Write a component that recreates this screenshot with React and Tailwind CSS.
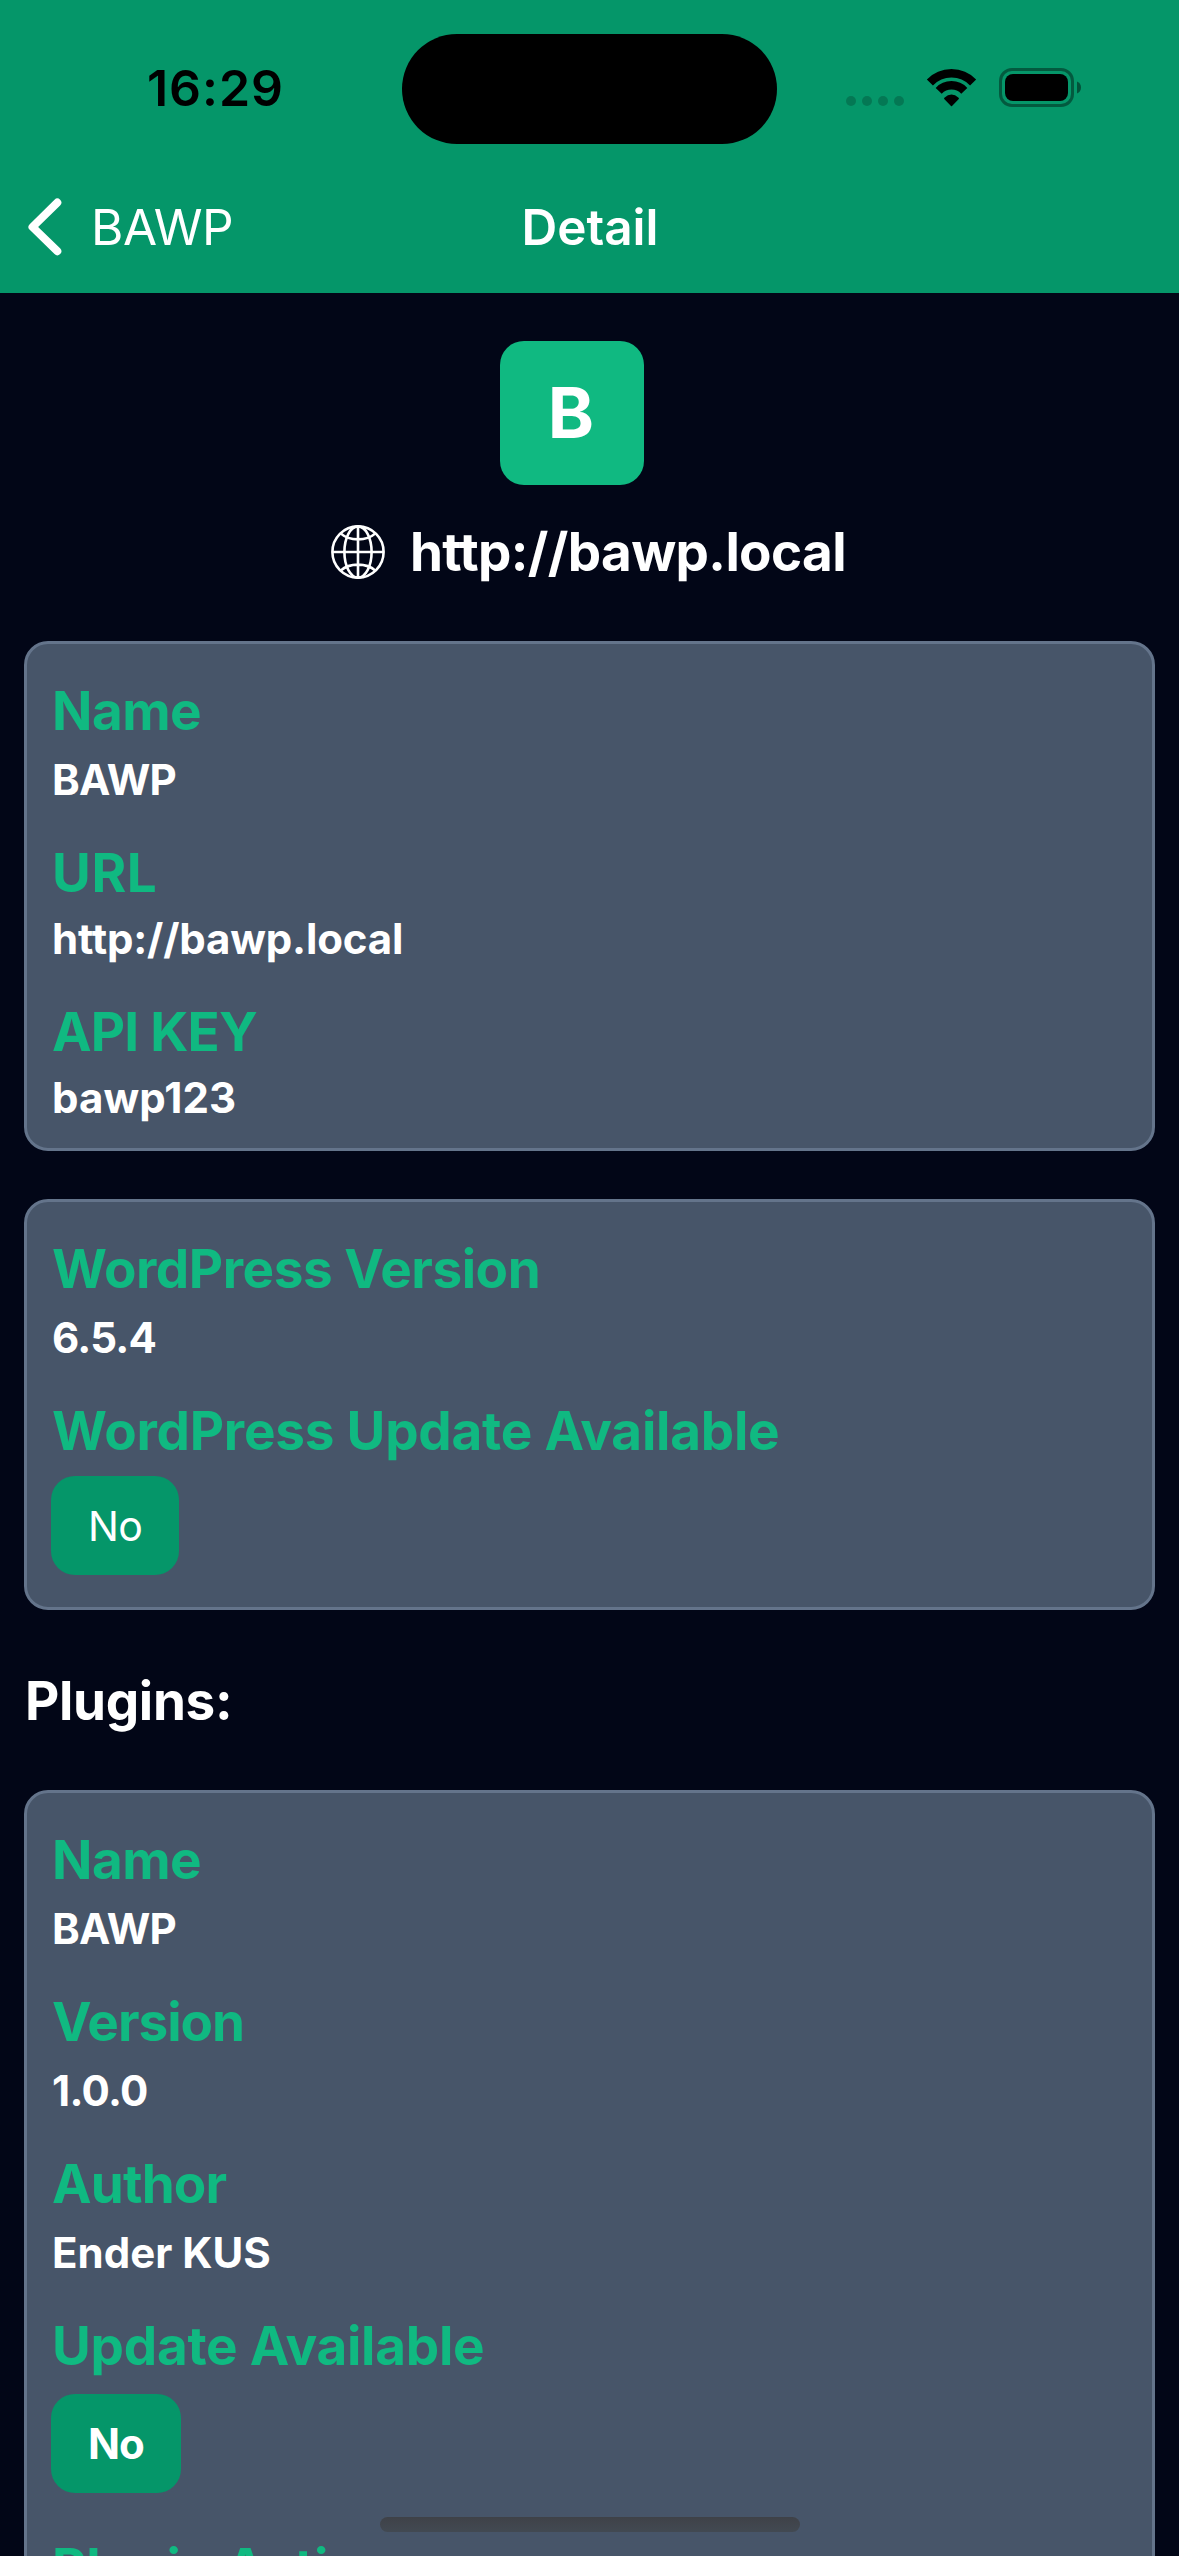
import React from "react";

function StatusBar() {
  return (
    <div className="flex h-[177px] items-start">
      <div className="w-[402px] pl-[147px] pt-[58px] text-[50px] font-semibold leading-[60px] tracking-[0.95px] text-black">
        16:29
      </div>
      <div className="mt-[34px] h-[110px] w-[375px] rounded-full bg-black" />
      <div className="ml-[69px] mt-[96px] flex gap-[6px]">
        {[0, 1, 2, 3].map((i) => (
          <span key={i} className="h-[10px] w-[10px] rounded-full bg-black/20" />
        ))}
      </div>
      <svg className="ml-[22px] mt-[69px]" width="51" height="38" viewBox="0 0 51 38" fill="none" stroke="#000" strokeWidth="8.4">
        <path d="M3.9 13.5A29.8 29.8 0 0 1 47.1 13.5" />
        <path d="M12.7 21.8A17.7 17.7 0 0 1 38.3 21.8" />
        <path d="M18.2 29.9Q17.8 29.3 18.4 28.8Q25.5 22.4 32.6 28.8Q33.2 29.3 32.8 29.9L26 37Q25.5 37.4 25 37Z" fill="#000" stroke="none" />
      </svg>
      <svg className="ml-[22px] mt-[68px]" width="83" height="39" viewBox="0 0 83 39" fill="none">
        <rect x="1.5" y="1.5" width="72" height="36" rx="11.5" stroke="#000" strokeOpacity="0.4" strokeWidth="3" />
        <rect x="6" y="6" width="63" height="27" rx="8" fill="#000" />
        <path d="M78 13.5C80.6 14.4 82 16.8 82 19.5C82 22.2 80.6 24.6 78 25.5Z" fill="#000" fillOpacity="0.45" />
      </svg>
    </div>
  );
}

function NavBar() {
  return (
    <div className="grid h-[116px] grid-cols-[1fr_auto_1fr] text-[49.5px] leading-[60px] text-white">
      <div className="flex items-start">
        <svg className="ml-[27px] mt-[20px]" width="36" height="60" viewBox="0 0 36 60" fill="none" stroke="#fff" strokeWidth="8" strokeLinecap="round" strokeLinejoin="round">
          <path d="M30.3 5.6L5.5 30L30.3 54.2" />
        </svg>
        <span className="ml-[28px] mt-[20px] tracking-[-0.5px]">BAWP</span>
      </div>
      <h1 className="ml-px mt-[20px] font-semibold">Detail</h1>
    </div>
  );
}

function Globe() {
  return (
    <svg width="54" height="54" viewBox="0 0 54 54" fill="none" stroke="#fff" strokeWidth="2.6">
      <circle cx="27" cy="27" r="25.6" />
      <ellipse cx="27" cy="27" rx="13.6" ry="25.6" />
      <path d="M27 1.4V52.6M1.4 27H52.6M9.6 8.4C18.5 16.4 35.5 16.4 44.4 8.4M9.6 45.6C18.5 37.6 35.5 37.6 44.4 45.6" />
    </svg>
  );
}

function Card({ className, children }) {
  return (
    <section className={`mx-[24px] rounded-[24px] border-[3px] border-[#64748b] bg-[#475569] pl-[24px] pt-[37px] ${className}`}>
      {children}
    </section>
  );
}

function Label({ className = "", children }) {
  return (
    <h3 className={`ml-px whitespace-nowrap text-[53px] font-bold leading-[60px] text-[#10b981] ${className}`}>{children}</h3>
  );
}

function Value({ className = "", children }) {
  return (
    <p className={`ml-px whitespace-nowrap text-[42px] font-bold leading-[48px] text-white ${className}`}>{children}</p>
  );
}

export default function App() {
  return (
    <div className="relative h-[2556px] w-[1179px] overflow-hidden bg-[#020617] font-['Inter',sans-serif]">
      <header className="h-[293px] bg-[#059669]">
        <StatusBar />
        <NavBar />
      </header>

      <div className="ml-[500px] mt-[48px] flex h-[144px] w-[144px] items-center justify-center rounded-[24px] bg-[#10b981] pr-[2px] text-[70px] font-bold leading-[84px] text-white">
        B
      </div>

      <div className="ml-[331px] mt-[37px] flex h-[60px] items-start">
        <div className="mt-[3px]">
          <Globe />
        </div>
        <h2 className="ml-[25px] text-[53px] font-bold leading-[60px] tracking-[-0.64px] text-white">http://bawp.local</h2>
      </div>

      <Card className="mt-[59px] h-[510px]">
        <Label className="tracking-[-0.5px]">Name</Label>
        <Value className="mt-[15px] tracking-[-0.7px]">BAWP</Value>
        <Label className="mt-[39px] tracking-[0.6px]">URL</Label>
        <Value className="mt-[12px] tracking-[-0.17px]">http://bawp.local</Value>
        <Label className="mt-[39px] tracking-[-0.78px]">API KEY</Label>
        <Value className="mt-[12px] tracking-[0.07px]">bawp123</Value>
      </Card>

      <Card className="mt-[48px] h-[411px]">
        <Label className="tracking-[-0.44px]">WordPress Version</Label>
        <Value className="mt-[15px] tracking-[-0.8px]">6.5.4</Value>
        <Label className="mt-[39px] tracking-[-0.21px]">WordPress Update Available</Label>
        <div className="mt-[15px] flex h-[99px] w-[128px] items-center justify-center rounded-[24px] bg-[#059669] text-[41px] leading-[48px] tracking-[-0.8px] text-white">
          No
        </div>
      </Card>

      <h2 className="ml-[25px] mt-[61px] text-[53px] font-bold leading-[60px] tracking-[-0.33px] text-white">Plugins:</h2>

      <Card className="mt-[59px] h-[1000px]">
        <Label className="tracking-[-0.5px]">Name</Label>
        <Value className="mt-[15px] tracking-[-0.7px]">BAWP</Value>
        <Label className="mt-[39px] tracking-[-0.99px]">Version</Label>
        <Value className="mt-[15px] tracking-[-0.7px]">1.0.0</Value>
        <Label className="mt-[39px] tracking-[-0.82px]">Author</Label>
        <Value className="mt-[15px]">Ender KUS</Value>
        <Label className="mt-[39px] tracking-[-0.24px]">Update Available</Label>
        <div className="mt-[18px] flex h-[99px] w-[130px] items-center justify-center rounded-[24px] bg-[#059669] text-[42px] font-bold leading-[48px] tracking-[-1px] text-white">
          No
        </div>
        <Label className="mt-[45px] tracking-[-0.2px]">Plugin Active</Label>
      </Card>

      <div className="absolute left-[380px] top-[2517px] h-[15px] w-[420px] rounded-full bg-linear-to-b from-[#3f4248] to-[#424952]" />
    </div>
  );
}
